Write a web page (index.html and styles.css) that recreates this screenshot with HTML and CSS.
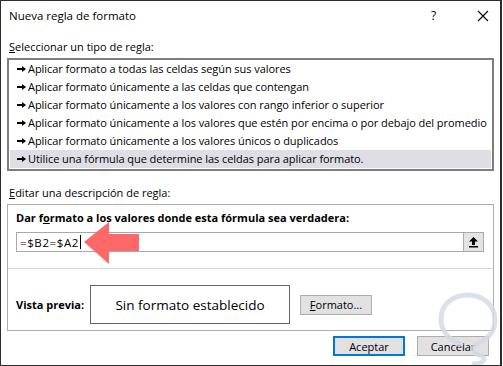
FILE: index.html
```html
<!DOCTYPE html>
<html lang="es">
<head>
  <meta charset="UTF-8" />
  <meta name="viewport" content="width=device-width, initial-scale=1.0" />
  <title>Nueva regla de formato</title>
  <link rel="stylesheet" href="styles.css">
</head>
<body>
  <div class="dialog">
    <div class="titlebar">
      <span class="title">Nueva regla de formato</span>
      <span class="help">?</span>
      <span class="close">
        <svg width="12" height="12" viewBox="0 0 12 12"><path d="M1 1L11 11M11 1L1 11" stroke="#000" stroke-width="1.1" /></svg>
      </span>
    </div>

    <div class="content">
      <div class="section-label"><u>S</u>eleccionar un tipo de regla:</div>
      <div class="rule-list">
        <div class="rule"><span class="tick"></span>Aplicar formato a todas las celdas según sus valores</div>
        <div class="rule"><span class="tick"></span>Aplicar formato únicamente a las celdas que contengan</div>
        <div class="rule"><span class="tick"></span>Aplicar formato únicamente a los valores con rango inferior o superior</div>
        <div class="rule"><span class="tick"></span>Aplicar formato únicamente a los valores que estén por encima o por debajo del promedio</div>
        <div class="rule"><span class="tick"></span>Aplicar formato únicamente a los valores únicos o duplicados</div>
        <div class="rule selected"><span class="tick"></span>Utilice una fórmula que determine las celdas para aplicar formato.</div>
      </div>

      <div class="section-label edit-label"><u>E</u>ditar una descripción de regla:</div>
      <div class="rule-box">
        <div class="field-label">Dar f<u>o</u>rmato a los valores donde esta fórmula sea verdadera:</div>
        <div class="formula">
          <span class="formula-text">=$B2=$A2</span><span class="caret"></span>
          <span class="collapse">
            <svg width="11" height="12" viewBox="0 0 11 12"><path d="M5.5 1L10 5.5H7V9H4V5.5H1Z" fill="#000" /><rect x="1" y="10" width="9" height="1.5" fill="#000" /></svg>
          </span>
        </div>
        <div class="divider"></div>
        <div class="preview-row">
          <span class="preview-label">Vista previa:</span>
          <div class="preview">Sin formato establecido</div>
          <button class="btn format-btn"><u>F</u>ormato...</button>
        </div>
      </div>

      <div class="actions">
        <button class="btn primary">Aceptar</button>
        <button class="btn">Cancelar</button>
      </div>
    </div>

    <svg class="pointer" width="60" height="44" viewBox="0 0 60 44">
      <path d="M0 20L25 0V12H55V29H25V42Z" fill="#fd6868" />
    </svg>

    <svg class="watermark" width="70" height="76" viewBox="0 0 70 76">
      <path d="M26 53C13 49 6 39 6 28C6 13 18 4 33 4C49 4 60 15 60 29C60 41 52 48 44 52C39 54 37 58 39 61C41 64 47 64 49 67C50 70 45 73 39 73" fill="none" stroke="#d3dae3" stroke-width="5" stroke-linecap="round" stroke-linejoin="round" opacity="0.8" />
    </svg>
  </div>
</body>
</html>
```

FILE: styles.css
```css
body {
  margin: 0;
  background: #fff;
  font-family: "Open Sans", "Noto Sans", sans-serif;
  font-size: 11px;
  color: #000;
}

.dialog {
  position: relative;
  width: 502px;
  height: 366px;
  box-sizing: border-box;
  border: 1px solid #2d2d2d;
  border-right-width: 2px;
  background: #fff;
  overflow: hidden;
}

.titlebar {
  height: 29px;
  display: flex;
  align-items: center;
  padding-left: 8px;
}

.title {
  flex: 1;
  font-size: 11.5px;
}

.help {
  width: 46px;
  font-size: 12px;
}

.close {
  width: 23px;
  display: flex;
  align-items: center;
}

.content {
  padding: 0 6px;
}

.section-label {
  margin-top: 9px;
  height: 16px;
  line-height: 16px;
  padding-left: 2px;
}

.rule-list {
  margin-top: 3px;
  border: 2px solid #7d7d7d;
  padding: 0 1px 1px;
}

.rule {
  height: 18px;
  line-height: 18px;
  display: flex;
  align-items: center;
  padding-left: 7px;
  white-space: nowrap;
  letter-spacing: -0.06px;
}

.rule.selected {
  background: #dfdee5;
}

.tick {
  position: relative;
  flex-shrink: 0;
  width: 6px;
  height: 2px;
  background: #000;
  margin-right: 5px;
}

.tick::after {
  content: "";
  position: absolute;
  left: 5px;
  top: -2px;
  border-left: 4px solid #000;
  border-top: 3px solid transparent;
  border-bottom: 3px solid transparent;
}

.edit-label {
  margin-top: 14px;
}

.rule-box {
  margin-top: 3px;
  border: 1px solid #adadad;
  padding: 5px 0 6px;
}

.field-label {
  font-weight: bold;
  height: 16px;
  line-height: 16px;
  padding-left: 8px;
}

.formula {
  margin: 6px 9px 0 8px;
  height: 20px;
  box-sizing: border-box;
  border: 1px solid #a8a8a8;
  display: flex;
  align-items: center;
  padding-left: 3px;
}

.formula-text {
  font-size: 11.5px;
  letter-spacing: 0.6px;
}

.caret {
  width: 1px;
  height: 14px;
  background: #000;
  margin-left: 1px;
}

.collapse {
  margin-left: auto;
  width: 20px;
  height: 18px;
  box-sizing: border-box;
  background: #e3e3e3;
  border-left: 1px solid #adadad;
  display: flex;
  align-items: center;
  justify-content: center;
}

.divider {
  margin-top: 16px;
  height: 1px;
  background: #d7d7d7;
}

.preview-row {
  margin-top: 16px;
  display: flex;
  align-items: center;
  padding-left: 8px;
}

.preview-label {
  font-weight: bold;
  width: 74px;
}

.preview {
  width: 200px;
  height: 39px;
  box-sizing: border-box;
  border: 1px solid #646464;
  display: flex;
  align-items: center;
  justify-content: center;
  font-size: 13.5px;
}

.btn {
  width: 72px;
  height: 20px;
  box-sizing: border-box;
  border: 1px solid #adadad;
  background: #e1e1e1;
  font-family: inherit;
  font-size: 11px;
  color: #000;
  padding: 0;
}

.format-btn {
  margin-left: 10px;
}

.actions {
  margin-top: 5px;
  display: flex;
  justify-content: flex-end;
  gap: 12px;
  padding-right: 5px;
}

.btn.primary {
  border: 2px solid #0078d7;
}

.pointer {
  position: absolute;
  left: 83px;
  top: 221px;
}

.watermark {
  position: absolute;
  left: 434px;
  top: 290px;
}
```
